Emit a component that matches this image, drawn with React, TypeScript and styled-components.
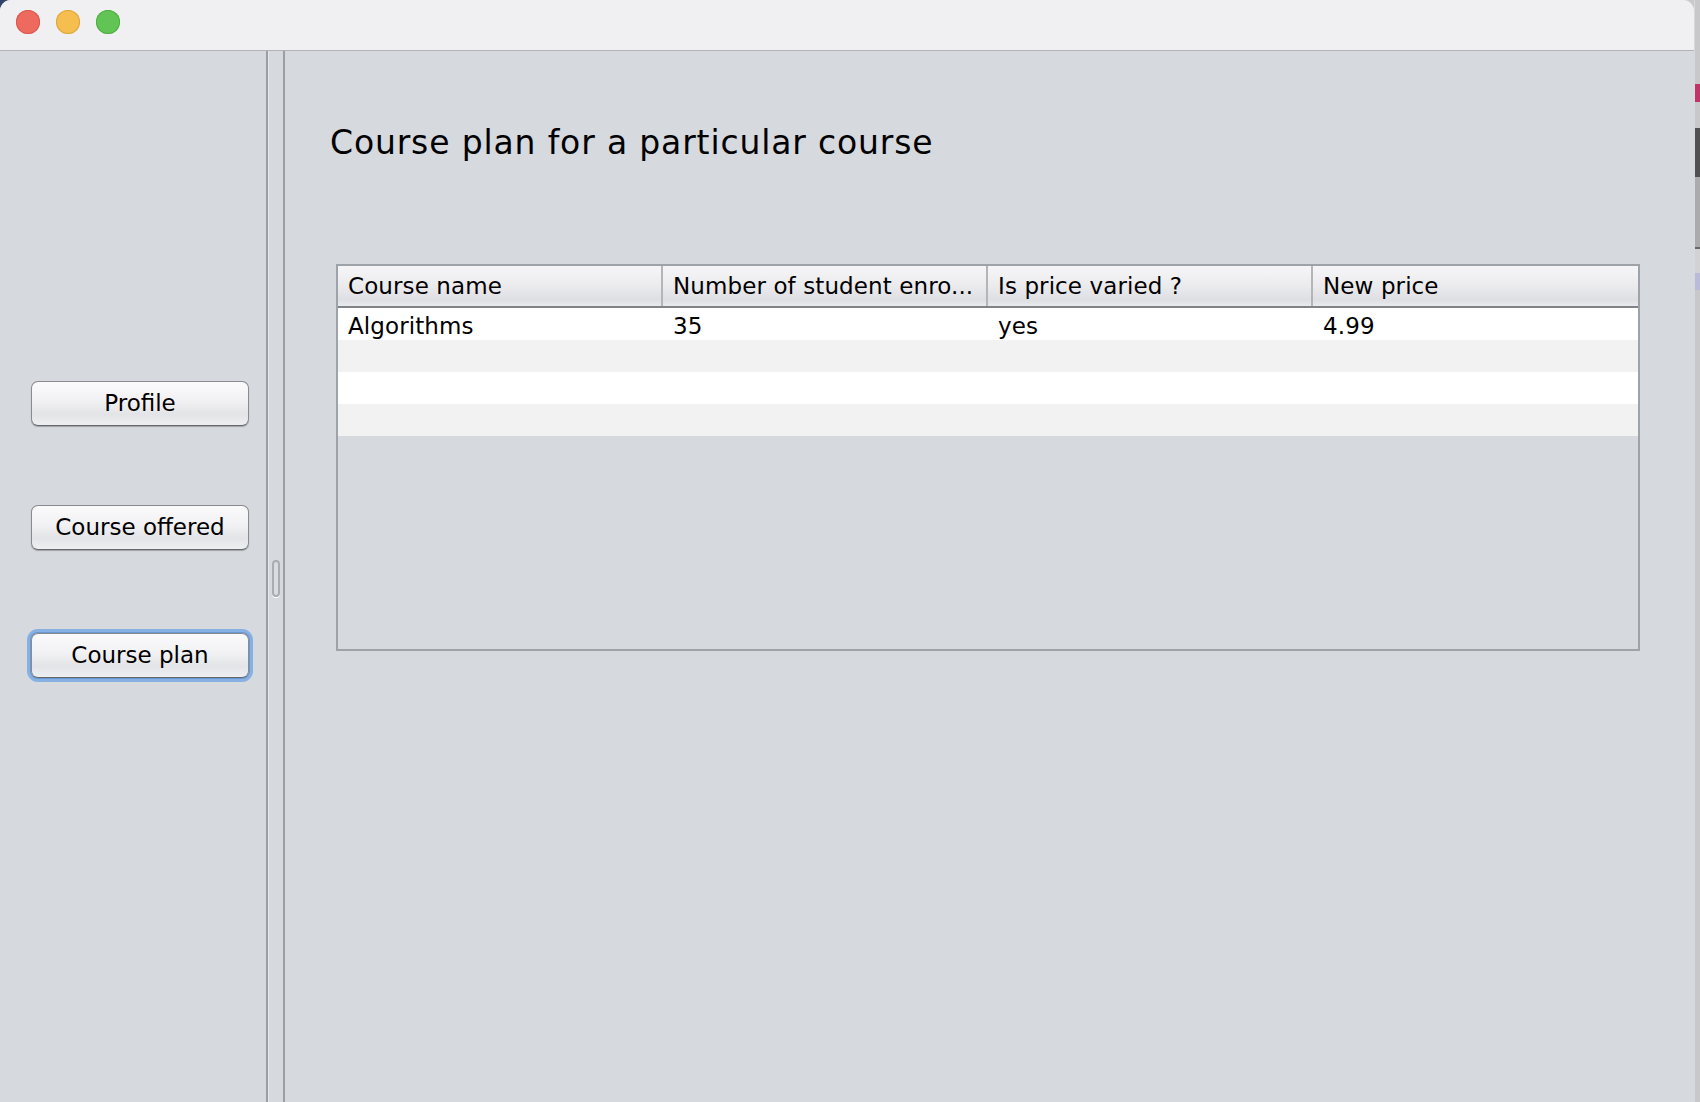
import React from "react";
import styled, { createGlobalStyle } from "styled-components";

const GlobalStyle = createGlobalStyle`
  html, body {
    margin: 0;
    padding: 0;
    background: #c9c9cc;
    overflow: hidden;
  }
  * { box-sizing: border-box; }
`;

const Desktop = styled.div`
  display: flex;
  width: 1700px;
  height: 1102px;
  background: linear-gradient(to right, #2f4468 0 24px, #c9c9cc 24px);
`;

const Window = styled.div`
  width: 1694px;
  height: 1102px;
  display: flex;
  flex-direction: column;
  background: #d6d9de;
  border-radius: 11px 11px 0 0;
  overflow: hidden;
  font-family: "DejaVu Sans", "Liberation Sans", sans-serif;
  color: #000000;
`;

const TitleBar = styled.div`
  height: 51px;
  flex: none;
  display: flex;
  align-items: flex-start;
  gap: 16px;
  padding: 10px 0 0 16px;
  background: #f0eff2;
  border-bottom: 1px solid #b2b3b7;
`;

const Light = styled.span<{ $fill: string; $ring: string }>`
  width: 24px;
  height: 24px;
  border-radius: 50%;
  background: ${(p) => p.$fill};
  box-shadow: inset 0 0 0 1px ${(p) => p.$ring};
`;

const Body = styled.div`
  flex: 1;
  display: flex;
  min-height: 0;
`;

const Sidebar = styled.div`
  width: 266px;
  flex: none;
  display: flex;
  flex-direction: column;
  padding: 330px 0 0 31px;
`;

const SideButton = styled.button<{ $focused?: boolean; $gap: number }>`
  width: 218px;
  height: 45px;
  margin-bottom: ${(p) => p.$gap}px;
  padding: 0;
  font-family: "DejaVu Sans", "Liberation Sans", sans-serif;
  font-size: 23px;
  line-height: 43px;
  letter-spacing: 0;
  color: #000000;
  text-align: center;
  background: linear-gradient(#fbfbfc 0%, #f1f1f3 45%, #e3e4e7 75%, #eeeff1 100%);
  border: 1px solid #8a8b8f;
  border-bottom-color: #66676c;
  border-radius: 7px;
  box-shadow: ${(p) =>
    p.$focused
      ? "0 0 0 1px #6a98d2, 0 0 0 4px #86b1e2"
      : "0 1px 1px rgba(0,0,0,0.25)"};
`;

const Splitter = styled.div`
  width: 19px;
  flex: none;
  display: flex;
  align-items: center;
  border-left: 2px solid #9b9ea4;
  border-right: 2px solid #9b9ea4;
  box-shadow: inset 1px 0 0 #e6e8ec;
  padding-left: 4px;
  padding-top: 4px;
`;

const Grip = styled.div`
  width: 8px;
  height: 37px;
  border: 2px solid #a9acb2;
  border-radius: 4px;
  background: #d9dce1;
  box-shadow: 0 1px 0 #ffffff;
`;

const Main = styled.div`
  flex: 1;
  display: flex;
  flex-direction: column;
  padding: 72px 0 0 45px;
`;

const Title = styled.h1`
  margin: 0;
  font-family: "DejaVu Sans", "Liberation Sans", sans-serif;
  font-weight: normal;
  font-size: 33px;
  line-height: 40px;
  letter-spacing: 0.85px;
  color: #000000;
`;

const TableFrame = styled.div`
  margin: 101px 0 0 6px;
  width: 1304px;
  height: 387px;
  border: 2px solid #9ea2a9;
  display: flex;
  flex-direction: column;
`;

const Columns = styled.div`
  display: grid;
  grid-template-columns: repeat(4, 1fr);
`;

const HeaderRow = styled(Columns)`
  height: 42px;
  border-bottom: 2px solid #7f8287;
  background: linear-gradient(#f6f6f8 0%, #ebebee 50%, #dedfe3 85%, #e9eaed 100%);
`;

const HeaderCell = styled.div<{ $last?: boolean }>`
  padding-left: 10px;
  font-size: 23px;
  line-height: 40px;
  letter-spacing: 0.1px;
  white-space: nowrap;
  overflow: hidden;
  border-right: ${(p) => (p.$last ? "none" : "2px solid #b3b5ba")};
`;

const DataRow = styled(Columns)<{ $alt?: boolean }>`
  height: 32px;
  background: ${(p) => (p.$alt ? "#f2f2f2" : "#ffffff")};
`;

const Cell = styled.div`
  padding: 2px 0 0 10px;
  font-size: 23px;
  line-height: 32px;
  letter-spacing: 0.1px;
  white-space: nowrap;
  overflow: hidden;
`;

const Strip = styled.div`
  width: 6px;
  flex: none;
  display: flex;
  flex-direction: column;
  background: #c8c8cb;
  border-left: 1px solid #d9d9dc;
`;

const StripBit = styled.div<{ $h: number; $c: string }>`
  height: ${(p) => p.$h}px;
  background: ${(p) => p.$c};
  flex: none;
`;

const headers = ["Course name", "Number of student enro...", "Is price varied ?", "New price"];
const rows: string[][] = [
  ["Algorithms", "35", "yes", "4.99"],
  ["", "", "", ""],
  ["", "", "", ""],
  ["", "", "", ""],
];

export default function App() {
  return (
    <>
      <GlobalStyle />
      <Desktop>
        <Window>
          <TitleBar>
            <Light $fill="#ee6a5f" $ring="#d9574d" />
            <Light $fill="#f5be4f" $ring="#dca63b" />
            <Light $fill="#61c454" $ring="#4fae43" />
          </TitleBar>
          <Body>
            <Sidebar>
              <SideButton $gap={79}>Profile</SideButton>
              <SideButton $gap={83}>Course offered</SideButton>
              <SideButton $gap={0} $focused>
                Course plan
              </SideButton>
            </Sidebar>
            <Splitter>
              <Grip />
            </Splitter>
            <Main>
              <Title>Course plan for a particular course</Title>
              <TableFrame>
                <HeaderRow>
                  {headers.map((h, i) => (
                    <HeaderCell key={h} $last={i === headers.length - 1}>
                      {h}
                    </HeaderCell>
                  ))}
                </HeaderRow>
                {rows.map((r, i) => (
                  <DataRow key={i} $alt={i % 2 === 1}>
                    {r.map((c, j) => (
                      <Cell key={j}>{c}</Cell>
                    ))}
                  </DataRow>
                ))}
              </TableFrame>
            </Main>
          </Body>
        </Window>
        <Strip>
          <StripBit $h={84} $c="#c8c8cb" />
          <StripBit $h={18} $c="#c2336a" />
          <StripBit $h={26} $c="#c8c8cb" />
          <StripBit $h={49} $c="#505052" />
          <StripBit $h={70} $c="#ababae" />
          <StripBit $h={2} $c="#68686c" />
          <StripBit $h={24} $c="#d2d2d5" />
          <StripBit $h={17} $c="#b9bbd9" />
        </Strip>
      </Desktop>
    </>
  );
}
